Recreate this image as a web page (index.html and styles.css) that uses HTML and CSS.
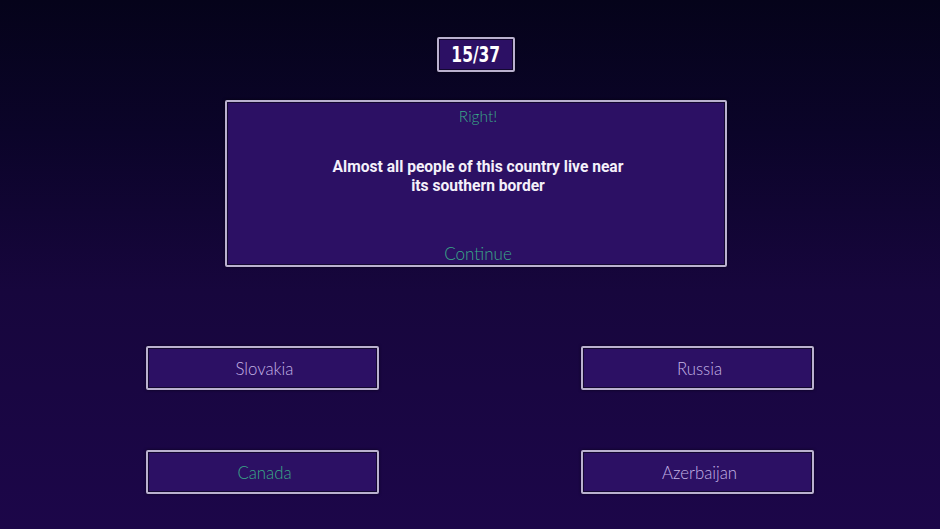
FILE: index.html
```html
<!DOCTYPE html>
<html lang="en">
<head>
  <meta charset="UTF-8" />
  <meta name="viewport" content="width=device-width, initial-scale=1.0" />
  <title>Geography Quiz</title>
  <link rel="stylesheet" href="styles.css">
</head>
<body>
  <div class="screen">
    <div class="counter"><span class="counter-digits">15/37</span></div>

    <div class="card">
      <div class="verdict">Right!</div>
      <div class="question">Almost all people of this country live near<br>its southern border</div>
      <div class="continue">Continue</div>
    </div>

    <div class="answers">
      <button class="answer">Slovakia</button>
      <button class="answer">Russia</button>
      <button class="answer correct">Canada</button>
      <button class="answer">Azerbaijan</button>
    </div>
  </div>
</body>
</html>
```

FILE: styles.css
```css
:root {
  --panel-bg: #2c1064;
  --frame: #bab1cf;
  --answer-text: #c4b3e6;
  --good: #3aaa88;
}

* {
  box-sizing: border-box;
}

body {
  margin: 0;
  padding: 0;
  height: 100vh;
  background: linear-gradient(to bottom, #05031a 0%, #0b0429 25%, #17063d 55%, #1c0649 100%);
  color: #fff;
  font-family: Lato, 'Open Sans', sans-serif;
  overflow: hidden;
}

.screen {
  display: flex;
  flex-direction: column;
  align-items: center;
  padding: 37px 0 0 12px;
}

/* framed panels share the same light rim with a dark inner line */
.counter, .card, .answer {
  background-color: var(--panel-bg);
  border: 2px solid var(--frame);
  box-shadow: inset 0 0 0 1px #140830, 0 0 3px rgba(0, 0, 0, 0.6);
  border-radius: 2px;
}

.counter {
  width: 78px;
  height: 35px;
  display: flex;
  align-items: center;
  justify-content: center;
}

.counter-digits {
  display: inline-block;
  font-family: 'DejaVu Sans Condensed', 'DejaVu Sans', sans-serif;
  font-weight: bold;
  font-size: 21px;
  transform: scaleX(0.82);
}

.card {
  width: 502px;
  height: 167px;
  margin-top: 28px;
  display: flex;
  flex-direction: column;
  align-items: center;
  padding: 5px 20px 1px 24px;
  text-align: center;
}

.verdict {
  font-size: 15.5px;
  line-height: 18px;
  font-weight: 300;
  color: var(--good);
}

.question {
  margin-top: 33px;
  font-family: Roboto, sans-serif;
  font-weight: bold;
  font-size: 15.6px;
  line-height: 19px;
  color: #f4f0fa;
}

.continue {
  margin-top: auto;
  font-size: 17px;
  line-height: 20px;
  font-weight: 300;
  color: var(--good);
}

.answers {
  display: grid;
  grid-template-columns: 233px 233px;
  column-gap: 202px;
  row-gap: 60px;
  margin-top: 79px;
  margin-left: 8px;
}

.answer {
  height: 44px;
  font-family: Lato, 'Open Sans', sans-serif;
  font-size: 16.8px;
  font-weight: 300;
  color: var(--answer-text);
  padding: 1px 0 0 4px;
  cursor: pointer;
}

.answer.correct {
  color: var(--good);
}
```
